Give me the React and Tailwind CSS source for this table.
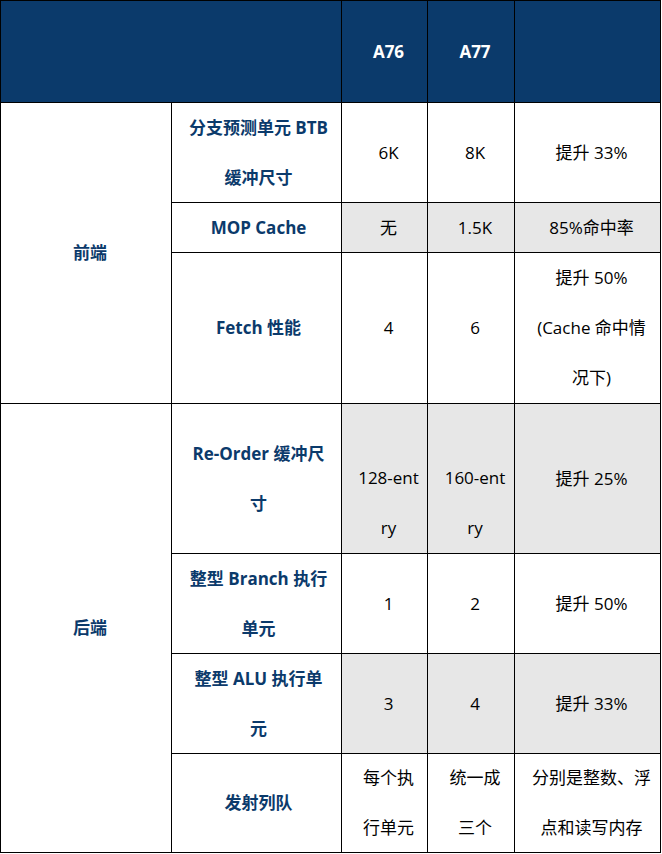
import React from 'react';

const rows = [
  {
    group: '前端',
    span: 3,
    items: [
      { label: ['分支预测单元 BTB', '缓冲尺寸'], a76: ['6K'], a77: ['8K'], note: ['提升 33%'] },
      { label: ['MOP Cache'], a76: ['无'], a77: ['1.5K'], note: ['85%命中率'], shade: true },
      { label: ['Fetch 性能'], a76: ['4'], a77: ['6'], note: ['提升 50%', '(Cache 命中情', '况下)'] },
    ],
  },
  {
    group: '后端',
    span: 4,
    items: [
      { label: ['Re-Order 缓冲尺', '寸'], a76: ['128-ent', 'ry'], a77: ['160-ent', 'ry'], note: ['提升 25%'], shade: true, low: true },
      { label: ['整型 Branch 执行', '单元'], a76: ['1'], a77: ['2'], note: ['提升 50%'] },
      { label: ['整型 ALU 执行单', '元'], a76: ['3'], a77: ['4'], note: ['提升 33%'], shade: true },
      { label: ['发射列队'], a76: ['每个执', '行单元'], a77: ['统一成', '三个'], note: ['分别是整数、浮', '点和读写内存'] },
    ],
  },
];

function Lines({ lines }) {
  return lines.map((l, i) => (
    <span key={i} className="block whitespace-nowrap">{l}</span>
  ));
}

function Cell({ lines, shade, label, low }) {
  return (
    <div
      className={`flex flex-col items-center text-center ${low ? 'justify-end' : 'justify-center'} ${
        label ? 'pl-1 font-bold text-[#0b3a6b]' : 'pl-2 text-black'
      } ${shade ? 'bg-[#e7e7e7]' : 'bg-white'}`}
    >
      <Lines lines={lines} />
    </div>
  );
}

export default function App() {
  return (
    <div className="w-[662px] h-[854px] bg-white" style={{ fontFamily: '"Open Sans", "Noto Sans CJK SC", sans-serif' }}>
      <div className="grid w-[661px] grid-cols-[170px_169px_85px_86px_145px] grid-rows-[101px_99px_49px_150px_149px_99px_99px_98px] gap-px bg-black p-px text-[17px] leading-[50px]">
        <div className="col-span-2 bg-[#0b3a6b]" />
        <div className="flex items-center justify-center bg-[#0b3a6b] pl-2 font-bold text-white">A76</div>
        <div className="flex items-center justify-center bg-[#0b3a6b] pl-2 font-bold text-white">A77</div>
        <div className="bg-[#0b3a6b]" />

        {rows.map((g) => (
          <React.Fragment key={g.group}>
            <div
              className={`flex items-center justify-center bg-white pl-2 font-bold text-[#0b3a6b] ${
                g.span === 3 ? 'row-span-3' : 'row-span-4'
              }`}
            >
              {g.group}
            </div>
            {g.items.map((r, i) => (
              <React.Fragment key={i}>
                <Cell lines={r.label} label />
                <Cell lines={r.a76} shade={r.shade} low={r.low} />
                <Cell lines={r.a77} shade={r.shade} low={r.low} />
                <Cell lines={r.note} shade={r.shade} />
              </React.Fragment>
            ))}
          </React.Fragment>
        ))}
      </div>
    </div>
  );
}
